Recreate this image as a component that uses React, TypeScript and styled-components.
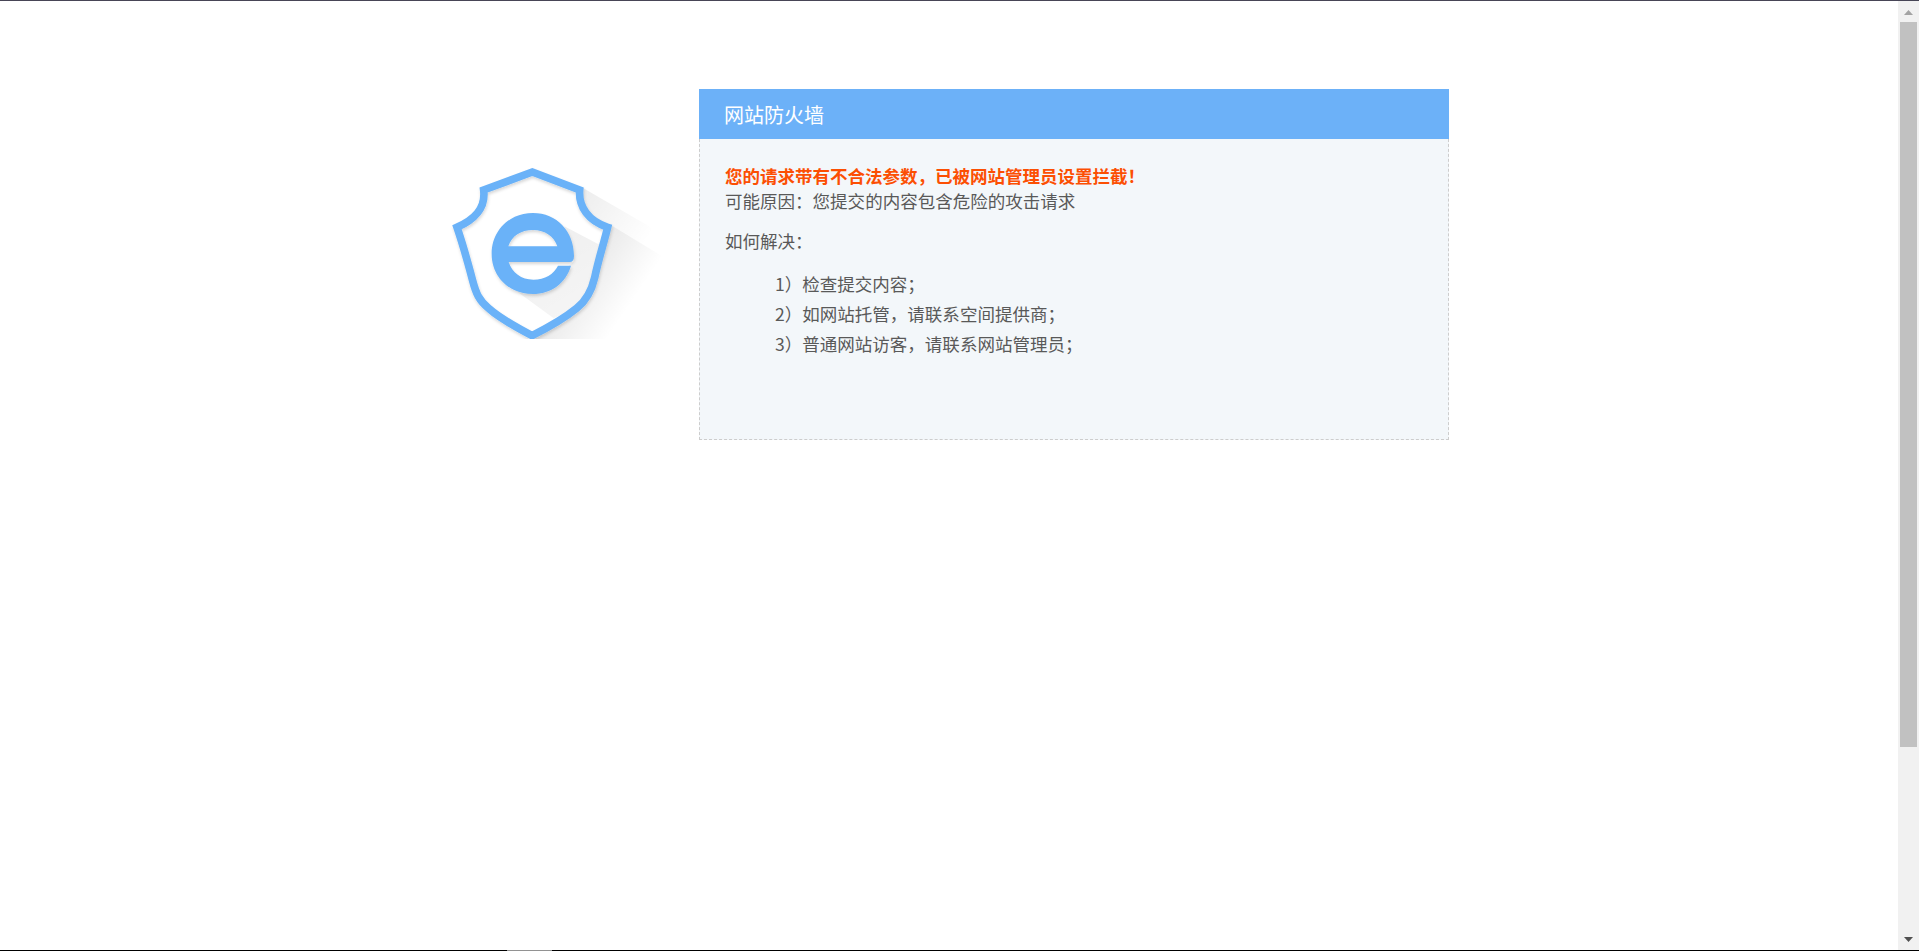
import React from 'react'
import styled, { createGlobalStyle } from 'styled-components'

const GlobalStyle = createGlobalStyle`
  * {
    box-sizing: border-box;
  }

  body {
    margin: 0;
    background: #fff;
    font-family: 'Noto Sans CJK SC', sans-serif;
    overflow: hidden;
  }
`

const Window = styled.div`
  display: flex;
  flex-direction: column;
  width: 100%;
  height: 100vh;
  border-top: 1px solid #474556;
`

const Viewport = styled.div`
  display: flex;
  flex: 1;
  min-height: 0;
`

const Page = styled.main`
  flex: 1;
  padding-top: 88px;
`

const Container = styled.div`
  display: flex;
  width: 1000px;
  margin: 0 auto;
`

const LogoColumn = styled.div`
  width: 250px;
  padding-top: 66px;
`

const Logo = styled.svg`
  display: block;
  width: 231px;
  height: 184px;
`

const Panel = styled.section`
  width: 750px;
`

const PanelHeader = styled.header`
  height: 50px;
  padding: 1px 0 0 25px;
  background: #6cb1f8;
  color: #fff;
  font-size: 20px;
  line-height: 50px;
`

const PanelBody = styled.div`
  height: 301px;
  padding: 24px 25px 0;
  border: 1px dashed #cdcdcd;
  border-top: none;
  background: #f3f7fa;
  color: #595959;
  font-size: 17.52px;
`

const Message = styled.p<{ $alert?: boolean }>`
  margin: 0;
  line-height: 25px;
  ${({ $alert }) => $alert && 'color: #fc4f03; font-size: 17.5px; font-weight: 700;'}
`

const Question = styled(Message)`
  margin-top: 15px;
`

const Steps = styled.ul`
  margin: 16px 0 0;
  padding-left: 50px;
  list-style: none;
  line-height: 30px;
`

const Scrollbar = styled.div`
  display: flex;
  flex-direction: column;
  justify-content: space-between;
  align-items: center;
  width: 21px;
  background: #f1f1f1;
`

const Thumb = styled.div`
  flex: 1;
  width: 17px;
  margin-bottom: 182px;
  background: #c1c1c1;
`

const Arrow = styled.svg`
  display: block;
  width: 21px;
  height: 21px;
`

const BottomEdge = styled.div`
  height: 1px;
  padding-left: 507px;
  background: #000;
`

const EdgeHandle = styled.div`
  width: 45px;
  height: 1px;
  background: #929292;
`

const steps = ['1）检查提交内容；', '2）如网站托管，请联系空间提供商；', '3）普通网站访客，请联系网站管理员；']

const shield =
  'M277 51 L419 105 C415 155 445 198 503 217 C490 270 475 315 464 368 C455 407 438 438 410 460 C372 491 322 519 276 542 C229 517 181 492 147 461 C117 436 108 415 98 377 C84 324 68 267 51 217 C102 194 138 162 131 105 Z'

function ShieldLogo() {
  return (
    <Logo viewBox="27 0 693 552">
      <defs>
        <linearGradient id="upper" gradientUnits="userSpaceOnUse" x1="430" y1="110" x2="630" y2="245">
          <stop offset="0" stopColor="#000" stopOpacity="0.07" />
          <stop offset="1" stopColor="#000" stopOpacity="0" />
        </linearGradient>
        <linearGradient id="outer" gradientUnits="userSpaceOnUse" x1="480" y1="250" x2="635" y2="355">
          <stop offset="0" stopColor="#000" stopOpacity="0.09" />
          <stop offset="1" stopColor="#000" stopOpacity="0" />
        </linearGradient>
        <linearGradient id="inner" gradientUnits="userSpaceOnUse" x1="330" y1="270" x2="440" y2="450">
          <stop offset="0" stopColor="#000" stopOpacity="0.06" />
          <stop offset="1" stopColor="#000" stopOpacity="0.04" />
        </linearGradient>
        <filter id="soft" x="-10%" y="-10%" width="120%" height="120%">
          <feDropShadow dx="2" dy="6" stdDeviation="5" floodColor="#000" floodOpacity="0.16" />
        </filter>
      </defs>
      <path d="M429 99 L630 215 L670 306 L516 212 C455 190 425 153 429 99 Z" fill="url(#upper)" />
      <path d="M516 212 L690 318 L590 552 L276 552 C322 528 372 500 410 470 C445 440 460 405 467 368 Z" fill="url(#outer)" />
      <path
        d="M373 214 L484 272 L460 368 C450 410 430 445 405 460 L341 490 L225 405 L278 417 L402 320 Z"
        fill="url(#inner)"
      />
      <g filter="url(#soft)">
        <path d={shield} fill="none" stroke="#6ab2f8" strokeWidth="23" strokeLinejoin="miter" />
      </g>
      <path
        filter="url(#soft)"
        fill="#6ab2f8"
        fillRule="evenodd"
        d="M279 174 C350 174 402 228 402 303 Q402 321 389 321 L206 321 C216 353 244 374 280 374 C315 374 341 358 354 332 L393 332 C378 384 334 417 278 417 C208 417 155 366 155 297 C155 227 208 174 279 174 Z M205 274 L352 274 C342 244 315 225 279 225 C243 225 215 243 205 274 Z"
      />
    </Logo>
  )
}

export default function App() {
  return (
    <>
      <GlobalStyle />
      <Window>
        <Viewport>
          <Page>
            <Container>
              <LogoColumn>
                <ShieldLogo />
              </LogoColumn>
              <Panel>
                <PanelHeader>网站防火墙</PanelHeader>
                <PanelBody>
                  <Message $alert>您的请求带有不合法参数，已被网站管理员设置拦截！</Message>
                  <Message>可能原因：您提交的内容包含危险的攻击请求</Message>
                  <Question>如何解决：</Question>
                  <Steps>
                    {steps.map((step) => (
                      <li key={step}>{step}</li>
                    ))}
                  </Steps>
                </PanelBody>
              </Panel>
            </Container>
          </Page>
          <Scrollbar>
            <Arrow viewBox="0 0 21 21">
              <path d="M6 14 L10.5 9 L15 14 Z" fill="#a3a3a3" />
            </Arrow>
            <Thumb />
            <Arrow viewBox="0 0 21 21">
              <path d="M6 8 L10.5 13 L15 8 Z" fill="#505050" />
            </Arrow>
          </Scrollbar>
        </Viewport>
        <BottomEdge>
          <EdgeHandle />
        </BottomEdge>
      </Window>
    </>
  )
}
